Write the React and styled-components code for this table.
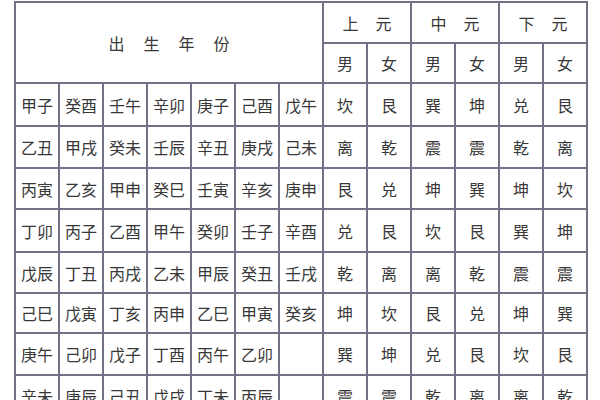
import { Fragment } from "react";
import styled, { createGlobalStyle } from "styled-components";

const GlobalStyle = createGlobalStyle`
  html, body {
    margin: 0;
    padding: 0;
    background: #ffffff;
    overflow: hidden;
  }
  body {
    font-family: "Noto Sans CJK SC", "Noto Sans", sans-serif;
  }
`;

const Page = styled.div`
  width: 600px;
  height: 400px;
  padding: 1px 0 0 14px;
  box-sizing: border-box;
  overflow: hidden;
`;

const Grid = styled.div`
  display: grid;
  grid-template-columns: repeat(13, 42px);
  grid-template-rows: 39px 38px 41px 40px 39px 41px 39px 38px 40px 40px;
  gap: 2px;
  padding: 2px;
  width: max-content;
  background: #727286;
`;

const Cell = styled.div`
  background: #ffffff;
  color: #383838;
  font-size: 16px;
  line-height: 1;
  display: flex;
  align-items: center;
  justify-content: center;
  white-space: nowrap;
  letter-spacing: ${(p) => p.$spread || 0}px;
  padding-left: ${(p) => p.$spread || 0}px;
  grid-column: ${(p) => p.$col || "auto"};
  grid-row: ${(p) => p.$row || "auto"};
`;

const years = [
  ["甲子", "癸酉", "壬午", "辛卯", "庚子", "己酉", "戊午"],
  ["乙丑", "甲戌", "癸未", "壬辰", "辛丑", "庚戌", "己未"],
  ["丙寅", "乙亥", "甲申", "癸巳", "壬寅", "辛亥", "庚申"],
  ["丁卯", "丙子", "乙酉", "甲午", "癸卯", "壬子", "辛酉"],
  ["戊辰", "丁丑", "丙戌", "乙未", "甲辰", "癸丑", "壬戌"],
  ["己巳", "戊寅", "丁亥", "丙申", "乙巳", "甲寅", "癸亥"],
  ["庚午", "己卯", "戊子", "丁酉", "丙午", "乙卯", ""],
  ["辛未", "庚辰", "己丑", "戊戌", "丁未", "丙辰", ""],
];

const gua = [
  ["坎", "艮", "巽", "坤", "兑", "艮"],
  ["离", "乾", "震", "震", "乾", "离"],
  ["艮", "兑", "坤", "巽", "坤", "坎"],
  ["兑", "艮", "坎", "艮", "巽", "坤"],
  ["乾", "离", "离", "乾", "震", "震"],
  ["坤", "坎", "艮", "兑", "坤", "巽"],
  ["巽", "坤", "兑", "艮", "坎", "艮"],
  ["震", "震", "乾", "离", "离", "乾"],
];

const eras = ["上元", "中元", "下元"];

export default function App() {
  return (
    <>
      <GlobalStyle />
      <Page>
        <Grid>
          <Cell $col="1 / span 7" $row="1 / span 2" $spread={19}>
            出生年份
          </Cell>
          {eras.map((era, i) => (
            <Cell key={era} $col={`${8 + i * 2} / span 2`} $row="1" $spread={17}>
              {era}
            </Cell>
          ))}
          {eras.map((era) => (
            <Fragment key={era}>
              <Cell>男</Cell>
              <Cell>女</Cell>
            </Fragment>
          ))}
          {years.map((row, r) => (
            <Fragment key={r}>
              {row.map((y, c) => (
                <Cell key={`y${c}`}>{y}</Cell>
              ))}
              {gua[r].map((g, c) => (
                <Cell key={`g${c}`}>{g}</Cell>
              ))}
            </Fragment>
          ))}
        </Grid>
      </Page>
    </>
  );
}
